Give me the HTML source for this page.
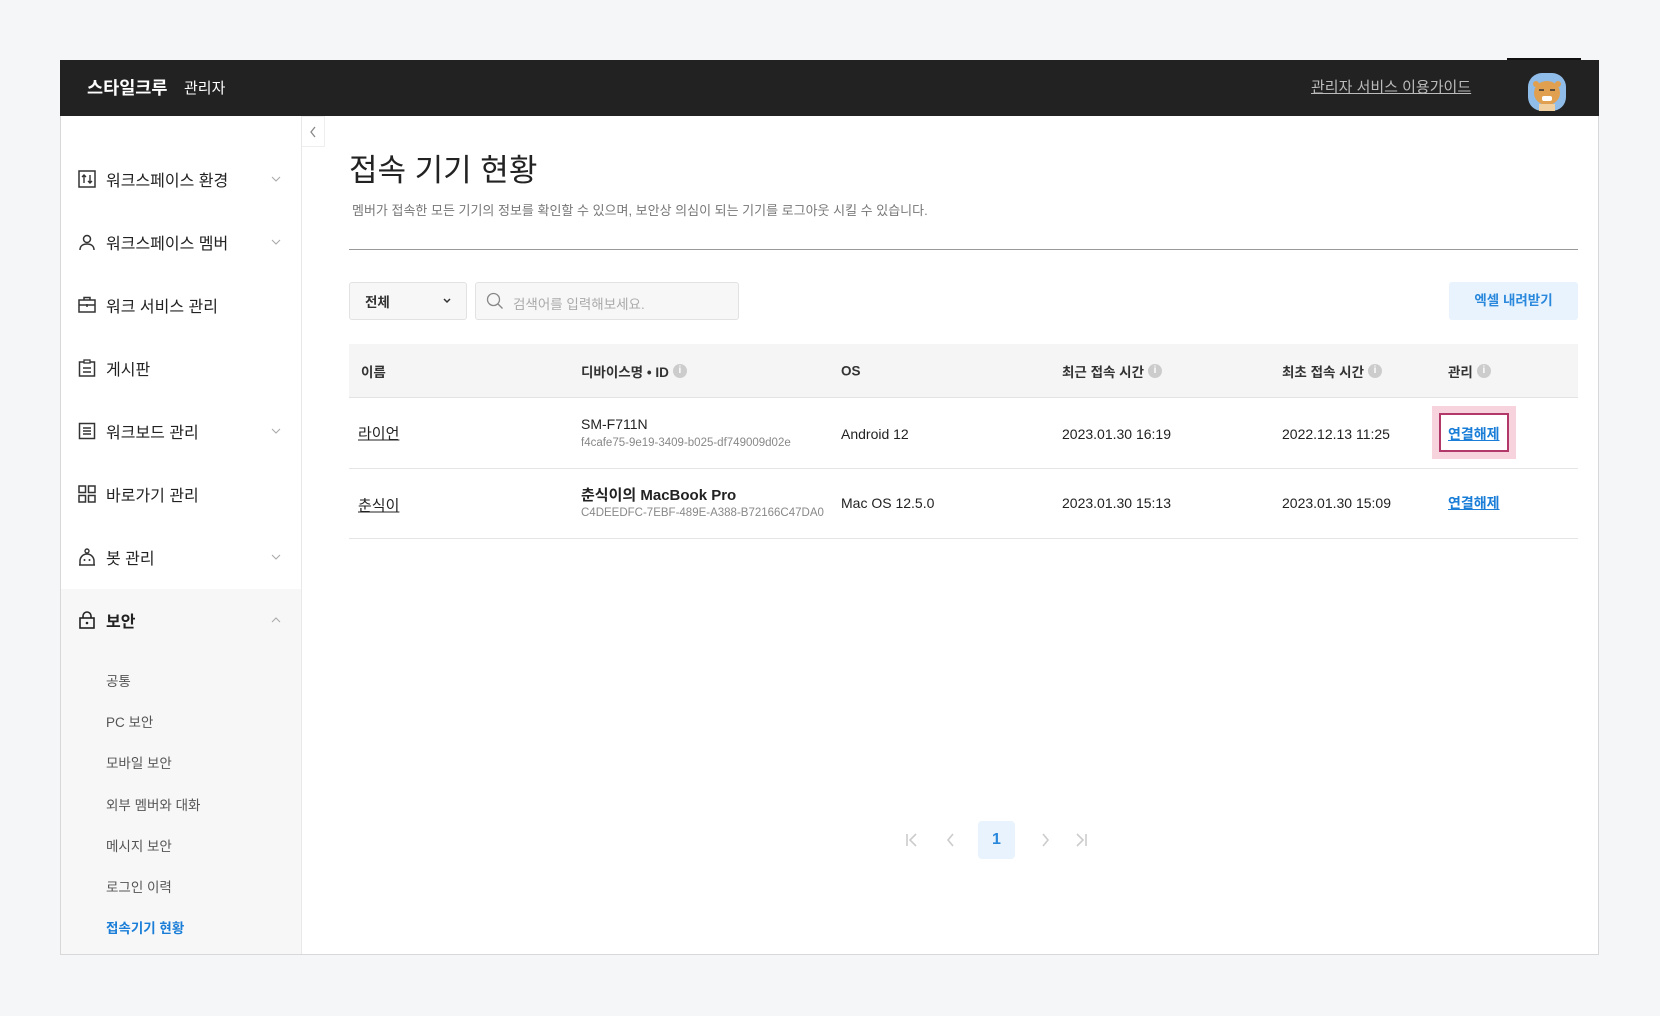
<!DOCTYPE html>
<html><head><meta charset="utf-8"><style>
*{box-sizing:border-box;margin:0;padding:0}
body{width:1660px;height:1016px;background:#f5f6f8;font-family:"Liberation Sans","Noto Sans CJK KR",sans-serif;color:#222;position:relative;overflow:hidden}
.a{position:absolute}
.frame{left:60px;top:60px;width:1539px;height:895px;background:#fff;border:1px solid #d8d8d8;border-top:none}
.hdr{left:60px;top:60px;width:1539px;height:56px;background:#222}
.side{left:61px;top:116px;width:241px;height:838px;background:#fff;border-right:1px solid #e8e8e8}
.sec{left:61px;top:589px;width:241px;height:365px;background:#f7f7f7;border-right:1px solid #e8e8e8}
.mi{left:106px;font-size:16px;color:#222;transform:translateY(-50%)}
.ic{left:78px;width:18px;height:18px;transform:translateY(-50%)}
.chev{left:271px;width:10px;height:6px;transform:translateY(-50%)}
.sub{left:106px;font-size:13.5px;color:#555;transform:translateY(-50%)}
.th{top:371px;font-size:13.5px;font-weight:bold;color:#333;transform:translateY(-50%);display:flex;align-items:center;gap:4px}
.info{display:inline-block;width:14px;height:14px;border-radius:50%;background:#ccc;color:#fff;font-size:10px;text-align:center;line-height:14px}
.td{font-size:14px;color:#222;transform:translateY(-50%)}
.lnk{color:#1a7ed8;text-decoration:underline;font-size:14px;font-weight:bold}
</style></head><body>
<div class="a frame"></div>
<div class="a hdr"></div>
<div class="a" style="left:1507px;top:58px;width:74px;height:2px;background:#111"></div>
<div class="a" style="left:87px;top:75px;font-size:17.5px;font-weight:bold;color:#fff">스타일크루</div>
<div class="a" style="left:184px;top:77px;font-size:15px;color:#fff">관리자</div>
<div class="a" style="left:1311px;top:76px;font-size:15px;color:#bbb;text-decoration:underline">관리자 서비스 이용가이드</div>
<svg class="a" style="left:1527px;top:73px" width="40" height="38" viewBox="0 0 40 38"><rect x="1" y="0" width="38" height="38" rx="14" fill="#8fbce8"/><ellipse cx="20" cy="20" rx="13" ry="12" fill="#e0a050"/><circle cx="9" cy="11" r="3" fill="#e0a050"/><circle cx="31" cy="11" r="3" fill="#e0a050"/><rect x="15" y="23" width="10" height="5" rx="2" fill="#fff"/><rect x="12" y="31" width="16" height="7" fill="#f0d0a0"/><line x1="12" y1="17" x2="17" y2="17" stroke="#333" stroke-width="1.5"/><line x1="23" y1="17" x2="28" y2="17" stroke="#333" stroke-width="1.5"/></svg>

<div class="a side"></div>
<div class="a sec"></div>
<div class="a" style="left:302px;top:116px;width:23px;height:31px;border:1px solid #eee;border-left:none;background:#fff"></div>
<svg class="a" style="left:308px;top:125px" width="10" height="14"><path d="M7 2L3 7l4 5" fill="none" stroke="#888" stroke-width="1.3"/></svg>

<svg class="a ic" style="top:179px" viewBox="0 0 18 18"><rect x="1" y="1" width="16" height="16" fill="none" stroke="#333" stroke-width="1.5"/><path d="M6 13V5M4 7l2-2 2 2M12 5v8M10 11l2 2 2-2" fill="none" stroke="#333" stroke-width="1.4"/></svg>
<div class="a mi" style="top:179px">워크스페이스 환경</div>
<svg class="a ic" style="top:242px" viewBox="0 0 18 18"><circle cx="9" cy="6" r="3.5" fill="none" stroke="#333" stroke-width="1.5"/><path d="M2 17c0-4 3-6 7-6s7 2 7 6" fill="none" stroke="#333" stroke-width="1.5"/></svg>
<div class="a mi" style="top:242px">워크스페이스 멤버</div>
<svg class="a ic" style="top:305px" viewBox="0 0 18 18"><rect x="1" y="4" width="16" height="12" fill="none" stroke="#333" stroke-width="1.5"/><path d="M6 4V1.5h6V4M1 9h16M9 8v3" fill="none" stroke="#333" stroke-width="1.5"/></svg>
<div class="a mi" style="top:305px">워크 서비스 관리</div>
<svg class="a ic" style="top:368px" viewBox="0 0 18 18"><rect x="1.5" y="3" width="15" height="14" fill="none" stroke="#333" stroke-width="1.5"/><rect x="6" y="1" width="6" height="3" fill="#fff" stroke="#333" stroke-width="1.3"/><path d="M5 9h8M5 13h8" stroke="#333" stroke-width="1.4"/></svg>
<div class="a mi" style="top:368px">게시판</div>
<svg class="a ic" style="top:431px" viewBox="0 0 18 18"><rect x="1.5" y="1.5" width="15" height="15" fill="none" stroke="#333" stroke-width="1.5"/><path d="M5 6h8M5 9h8M5 12h8" stroke="#333" stroke-width="1.4"/></svg>
<div class="a mi" style="top:431px">워크보드 관리</div>
<svg class="a ic" style="top:494px" viewBox="0 0 18 18"><g fill="none" stroke="#333" stroke-width="1.5"><rect x="1" y="1" width="6.5" height="6.5"/><rect x="10.5" y="1" width="6.5" height="6.5"/><rect x="1" y="10.5" width="6.5" height="6.5"/><rect x="10.5" y="10.5" width="6.5" height="6.5"/></g></svg>
<div class="a mi" style="top:494px">바로가기 관리</div>
<svg class="a ic" style="top:557px" viewBox="0 0 18 18"><circle cx="9" cy="3" r="2" fill="none" stroke="#333" stroke-width="1.4"/><path d="M2 17v-4a7 7 0 0 1 14 0v4M1 17h16" fill="none" stroke="#333" stroke-width="1.5"/><circle cx="6.5" cy="12" r="1" fill="#333"/><circle cx="11.5" cy="12" r="1" fill="#333"/></svg>
<div class="a mi" style="top:557px">봇 관리</div>
<svg class="a ic" style="top:620px" viewBox="0 0 18 18"><rect x="2" y="7" width="14" height="10" fill="none" stroke="#222" stroke-width="1.6"/><path d="M5 7V5a4 4 0 0 1 8 0v2" fill="none" stroke="#222" stroke-width="1.6"/><circle cx="9" cy="12" r="1.3" fill="#222"/></svg>
<div class="a mi" style="top:620px;font-weight:bold">보안</div>
<svg class="a chev" style="top:179px" viewBox="0 0 10 6"><path d="M1 1l4 4 4-4" fill="none" stroke="#aaa" stroke-width="1.1"/></svg>
<svg class="a chev" style="top:242px" viewBox="0 0 10 6"><path d="M1 1l4 4 4-4" fill="none" stroke="#aaa" stroke-width="1.1"/></svg>
<svg class="a chev" style="top:431px" viewBox="0 0 10 6"><path d="M1 1l4 4 4-4" fill="none" stroke="#aaa" stroke-width="1.1"/></svg>
<svg class="a chev" style="top:557px" viewBox="0 0 10 6"><path d="M1 1l4 4 4-4" fill="none" stroke="#aaa" stroke-width="1.1"/></svg>
<svg class="a chev" style="top:620px" viewBox="0 0 10 6"><path d="M1 5l4-4 4 4" fill="none" stroke="#aaa" stroke-width="1.1"/></svg>

<div class="a sub" style="top:680px">공통</div>
<div class="a sub" style="top:721px">PC 보안</div>
<div class="a sub" style="top:762px">모바일 보안</div>
<div class="a sub" style="top:804px">외부 멤버와 대화</div>
<div class="a sub" style="top:845px">메시지 보안</div>
<div class="a sub" style="top:886px">로그인 이력</div>
<div class="a sub" style="top:927px;color:#1a7ed8;font-weight:bold">접속기기 현황</div>

<div class="a" style="left:349px;top:145px;font-size:31px;color:#222">접속 기기 현황</div>
<div class="a" style="left:352px;top:200px;font-size:13px;color:#777">멤버가 접속한 모든 기기의 정보를 확인할 수 있으며, 보안상 의심이 되는 기기를 로그아웃 시킬 수 있습니다.</div>
<div class="a" style="left:349px;top:249px;width:1229px;height:1px;background:#999"></div>

<div class="a" style="left:349px;top:282px;width:118px;height:38px;background:#f7f7f7;border:1px solid #e2e2e2;border-radius:3px"></div>
<div class="a" style="left:365px;top:291px;font-size:13.5px;font-weight:bold;color:#333">전체</div>
<svg class="a" style="left:443px;top:298px" width="8" height="6"><path d="M1 1l3 3 3-3" fill="none" stroke="#333" stroke-width="1.5"/></svg>
<div class="a" style="left:475px;top:282px;width:264px;height:38px;background:#f7f7f7;border:1px solid #e2e2e2;border-radius:3px"></div>
<svg class="a" style="left:486px;top:292px" width="18" height="18"><circle cx="7.5" cy="7.5" r="6" fill="none" stroke="#888" stroke-width="1.3"/><path d="M12 12l4.5 4.5" stroke="#888" stroke-width="1.3"/></svg>
<div class="a" style="left:513px;top:293px;font-size:13.5px;color:#aaa">검색어를 입력해보세요.</div>
<div class="a" style="left:1449px;top:282px;width:129px;height:38px;background:#e8f3fe;border-radius:3px;color:#2a88dc;font-size:13.5px;font-weight:bold;text-align:center;line-height:38px">엑셀 내려받기</div>

<div class="a" style="left:349px;top:344px;width:1229px;height:54px;background:#f5f5f5;border-bottom:1px solid #e3e3e3"></div>
<div class="a th" style="left:361px">이름</div>
<div class="a th" style="left:581px">디바이스명 • ID <span class="info">i</span></div>
<div class="a th" style="left:841px">OS</div>
<div class="a th" style="left:1062px">최근 접속 시간 <span class="info">i</span></div>
<div class="a th" style="left:1282px">최초 접속 시간 <span class="info">i</span></div>
<div class="a th" style="left:1448px">관리 <span class="info">i</span></div>

<div class="a" style="left:349px;top:468px;width:1229px;height:1px;background:#e5e5e5"></div>
<div class="a" style="left:349px;top:538px;width:1229px;height:1px;background:#e5e5e5"></div>

<div class="a td" style="left:358px;top:433px;font-size:15px;text-decoration:underline">라이언</div>
<div class="a" style="left:581px;top:416px;font-size:14px">SM-F711N</div>
<div class="a" style="left:581px;top:437px;font-size:11.5px;color:#888">f4cafe75-9e19-3409-b025-df749009d02e</div>
<div class="a td" style="left:841px;top:434px">Android 12</div>
<div class="a td" style="left:1062px;top:434px">2023.01.30 16:19</div>
<div class="a td" style="left:1282px;top:434px">2022.12.13 11:25</div>
<div class="a" style="left:1432px;top:406px;width:84px;height:53px;background:#f7d3de"></div>
<div class="a" style="left:1439px;top:413px;width:70px;height:39px;background:#fff;border:2px solid #b3386a"></div>
<div class="a td lnk" style="left:1448px;top:434px">연결해제</div>

<div class="a td" style="left:358px;top:505px;font-size:15px;text-decoration:underline">춘식이</div>
<div class="a" style="left:581px;top:484px;font-size:15px;font-weight:bold">춘식이의 MacBook Pro</div>
<div class="a" style="left:581px;top:507px;font-size:11.5px;color:#888">C4DEEDFC-7EBF-489E-A388-B72166C47DA0</div>
<div class="a td" style="left:841px;top:503px">Mac OS 12.5.0</div>
<div class="a td" style="left:1062px;top:503px">2023.01.30 15:13</div>
<div class="a td" style="left:1282px;top:503px">2023.01.30 15:09</div>
<div class="a td lnk" style="left:1448px;top:503px">연결해제</div>

<svg class="a" style="left:904px;top:832px" width="16" height="16"><path d="M3 2v12M12 2L6 8l6 6" fill="none" stroke="#ccc" stroke-width="1.6"/></svg>
<svg class="a" style="left:943px;top:832px" width="16" height="16"><path d="M10 2L5 8l5 6" fill="none" stroke="#ccc" stroke-width="1.6"/></svg>
<div class="a" style="left:978px;top:821px;width:37px;height:38px;background:#e8f3fe;border-radius:4px;color:#2a88dc;font-weight:bold;font-size:16px;text-align:center;line-height:38px">1</div>
<svg class="a" style="left:1037px;top:832px" width="16" height="16"><path d="M6 2l5 6-5 6" fill="none" stroke="#ccc" stroke-width="1.6"/></svg>
<svg class="a" style="left:1073px;top:832px" width="16" height="16"><path d="M4 2l6 6-6 6M13 2v12" fill="none" stroke="#ccc" stroke-width="1.6"/></svg>
</body></html>
